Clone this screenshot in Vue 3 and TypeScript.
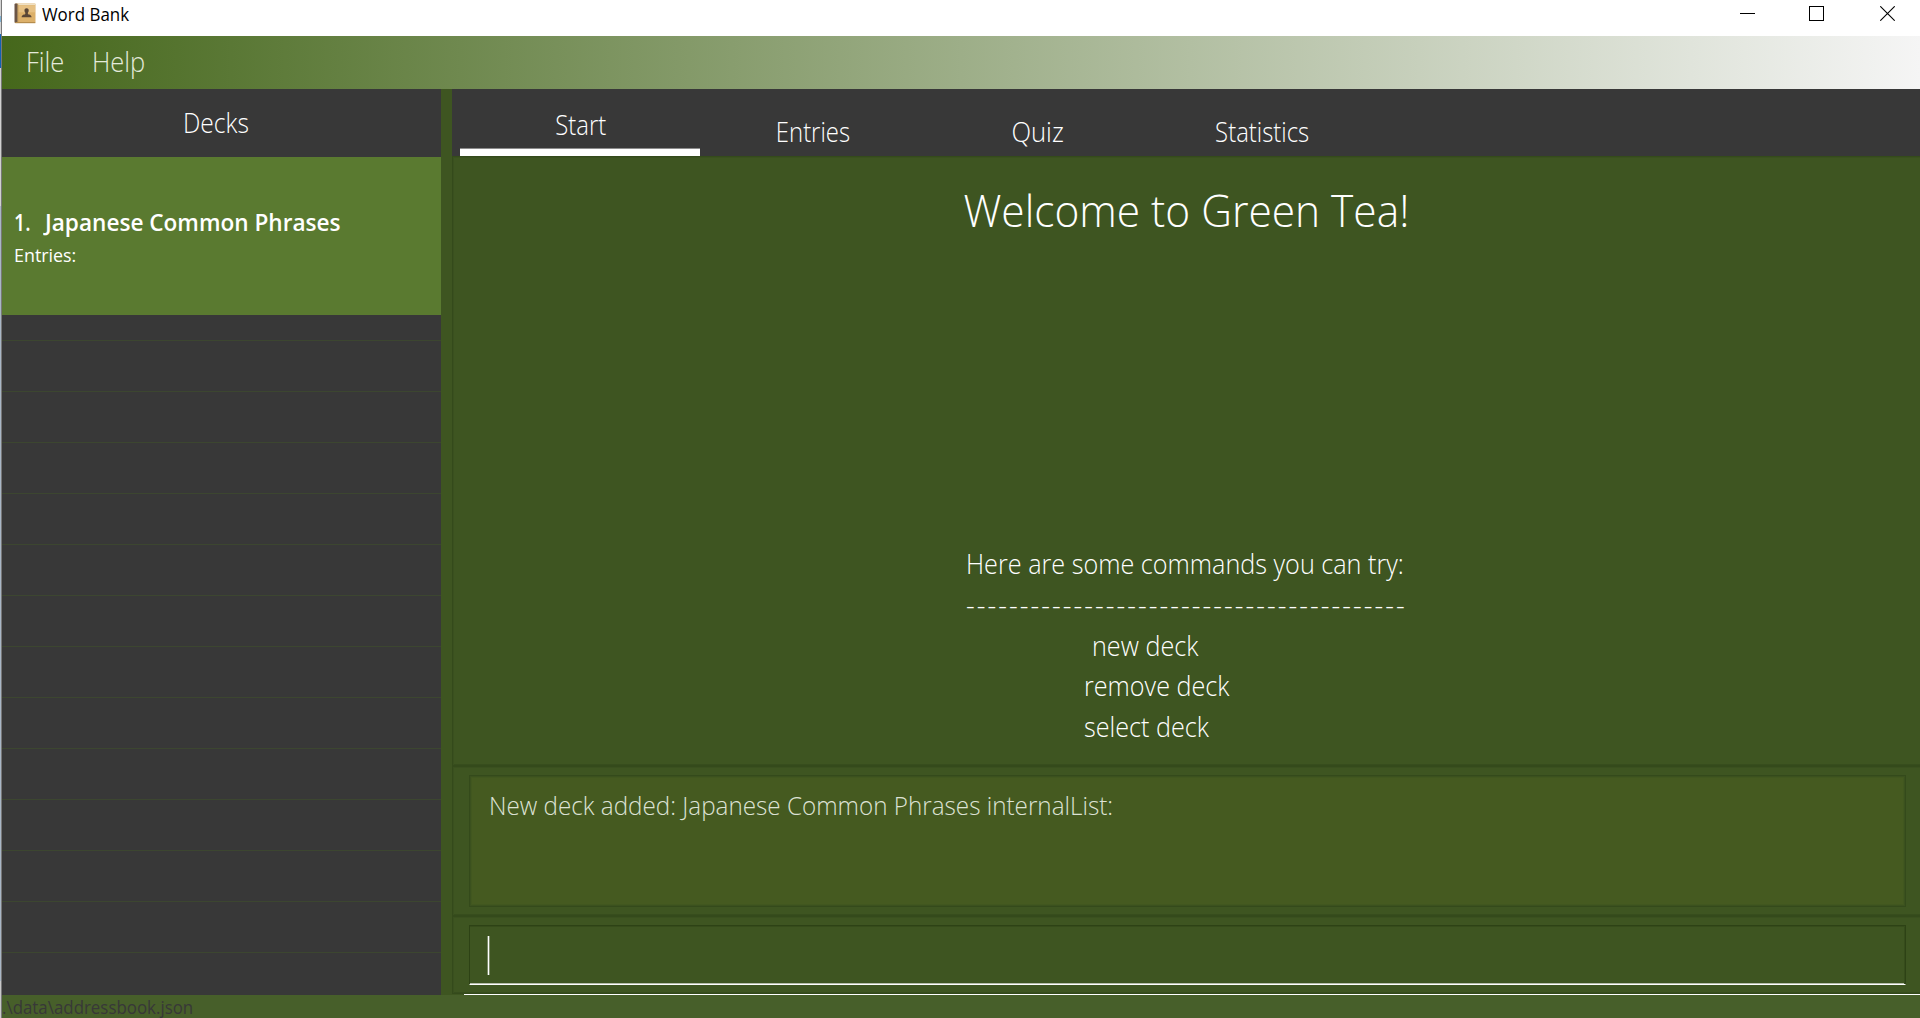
<script setup lang="ts">
interface Tab {
  key: string
  label: string
  active: boolean
}

const menus: string[] = ['File', 'Help']
const tabs: Tab[] = [
  { key: 'start', label: 'Start', active: true },
  { key: 'entries', label: 'Entries', active: false },
  { key: 'quiz', label: 'Quiz', active: false },
  { key: 'statistics', label: 'Statistics', active: false },
]
const rule: string = '-'.repeat(41)
const commands: string[] = ['new deck', 'remove deck', 'select deck']
</script>

<template>
  <div class="screen">
    <div class="edge"></div>
    <div class="window">
      <header class="titlebar">
        <svg class="app-icon" width="22" height="21" viewBox="0 0 22 21">
          <rect x="1" y="0.5" width="20.5" height="19.5" rx="1" fill="#dcb06a" />
          <rect x="4" y="0.5" width="17.5" height="1.6" fill="#efe0c4" />
          <rect x="4.5" y="2.3" width="16.5" height="7" fill="#e6c083" />
          <rect x="0.5" y="0.5" width="3.2" height="19.5" rx="1" fill="#6b5546" />
          <rect x="3.2" y="1" width="1" height="18.5" fill="#a98a5c" />
          <rect x="1.3" y="19" width="20" height="1.2" fill="#b58c4c" />
          <path d="M12.6 5.2c1.6 0 2.3 1.1 2.1 2.6-.1 1-.5 1.5-.8 1.9v1.3c.5.6 3.700.6 3.700 3.300H7.600c0-2.700 3.200-2.700 3.700-3.300V9.700c-.3-.4-.7-.9-.8-1.900-.2-1.500.5-2.600 2.100-2.600z" fill="#5a4636" />
        </svg>
        <span class="title">Word Bank</span>
        <div class="controls">
          <svg width="15" height="15" viewBox="0 0 15 15"><rect y="7" width="15" height="1" fill="#000" /></svg>
          <svg width="15" height="15" viewBox="0 0 15 15"><rect x="0.5" y="0.5" width="14" height="14" fill="none" stroke="#000" /></svg>
          <svg class="close" width="15" height="15" viewBox="0 0 15 15"><path d="M0.3 0.3L14.7 14.7M14.7 0.3L0.3 14.7" stroke="#000" stroke-width="1.1" /></svg>
        </div>
      </header>

      <nav class="menubar">
        <span v-for="m in menus" :key="m" :class="m.toLowerCase()">{{ m }}</span>
      </nav>

      <div class="body">
        <aside class="sidebar">
          <div class="side-head"><span>Decks</span></div>
          <div class="deck">
            <div class="deck-name"><span class="num">1.</span><span class="name">Japanese Common Phrases</span></div>
            <div class="deck-sub"><span>Entries:</span></div>
          </div>
          <div class="empty first"></div>
          <div v-for="n in 12" :key="n" class="empty"></div>
        </aside>

        <main class="content">
          <div class="tabs">
            <div v-for="t in tabs" :key="t.key" class="tab" :class="[t.key, { active: t.active }]"><span>{{ t.label }}</span></div>
          </div>
          <section class="pane start-pane">
            <h1>Welcome to Green Tea!</h1>
            <div class="hints">
              <div class="hint-head"><span>Here are some commands you can try:</span></div>
              <div class="rule">{{ rule }}</div>
              <div v-for="(c, i) in commands" :key="c" class="cmd" :class="'cmd' + i"><span>{{ c }}</span></div>
            </div>
          </section>
          <section class="pane result-pane">
            <div class="result"><span>New deck added: Japanese Common Phrases internalList:</span></div>
          </section>
          <section class="pane command-pane">
            <div class="command"><i class="caret"></i></div>
          </section>
          <div class="baseline"></div>
        </main>
      </div>

      <footer class="status"><span>.\data\addressbook.json</span></footer>
    </div>
  </div>
</template>

<style>
body {
  margin: 0;
  overflow: hidden;
}
</style>

<style scoped>
.screen {
  display: flex;
  width: 1920px;
  height: 1018px;
  overflow: hidden;
  font-family: "Open Sans", "Noto Sans", sans-serif;
  font-weight: 300;
  color: #fff;
  white-space: pre;
}
span {
  display: inline-block;
  transform-origin: 0 50%;
}
.edge {
  box-sizing: border-box;
  width: 2px;
  border-right: 1px solid #787878;
  background: linear-gradient(#d4d4d4 0 16px, #7fb0d0 16px 22px, #d4d4d4 22px 34px, #1161b4 34px 68px, #d0d0d0 68px 206px, #a9b7c6 206px 981px, #c8c8c8 981px);
}
.window {
  display: flex;
  flex-direction: column;
  width: 1918px;
}
.titlebar {
  display: flex;
  height: 36px;
  background: #fff;
  color: #000;
}
.app-icon {
  margin: 3px 6px 0 12px;
}
.title {
  font-size: 18px;
  line-height: 28px;
  font-weight: 400;
  transform: scaleX(0.94);
}
.controls {
  display: flex;
  gap: 54px;
  margin: 6px 25px 0 auto;
}
.close {
  margin-left: 2px;
}
.menubar {
  display: flex;
  height: 53px;
  padding-left: 24px;
  background: linear-gradient(90deg, #45671b, #f5f5f5);
  font-size: 28px;
  line-height: 51px;
  color: #e4eadb;
}
.menubar span {
  transform: scaleX(0.91);
}
.help {
  margin-left: 24px;
}
.body {
  display: flex;
  height: 906px;
  background: #3e5521;
}
.sidebar {
  width: 439px;
  margin-right: 11px;
  background: #383838;
  overflow: hidden;
}
.side-head {
  height: 68px;
  padding-left: 181px;
  font-size: 27px;
  line-height: 68px;
}
.side-head span {
  transform: scaleX(0.91);
}
.deck {
  box-sizing: border-box;
  height: 158px;
  padding: 50px 0 0 12px;
  background: #5a7a30;
}
.deck-name {
  display: flex;
  height: 32px;
  font-size: 23px;
  line-height: 30px;
  font-weight: 600;
}
.num {
  width: 31px;
  transform: scaleX(0.85);
}
.name {
  transform: scaleX(0.982);
}
.deck-sub {
  font-size: 19px;
  line-height: 32px;
  font-weight: 400;
}
.deck-sub span {
  transform: scaleX(0.94);
}
.empty {
  box-sizing: border-box;
  height: 51px;
  border-bottom: 1px solid #3c4630;
}
.empty.first {
  height: 26px;
}
.content {
  display: flex;
  flex-direction: column;
  width: 1468px;
}
.tabs {
  display: flex;
  height: 67px;
  padding-left: 8px;
  background: #383838;
  font-size: 27px;
}
.tab {
  box-sizing: border-box;
  width: 225px;
  height: 67px;
  text-align: center;
  line-height: 86px;
}
.tab span {
  transform: scaleX(0.885);
  transform-origin: 50% 50%;
}
.tab.quiz span {
  transform: scaleX(0.95);
}
.tab.active {
  width: 240px;
  padding-left: 1px;
  line-height: 72px;
  border-bottom: 7px solid #fff;
  box-shadow: inset 0 -1px #8c8c8c;
}
.pane {
  box-sizing: border-box;
  border: solid #344a1b;
  border-width: 1px 0 1px 1px;
  box-shadow: inset 1px 1px #3a501f, inset 0 -1px #374d1d;
}
.start-pane {
  display: flex;
  flex-direction: column;
  align-items: center;
  height: 610px;
}
h1 {
  margin: 23px 0 0;
  font-size: 45px;
  line-height: 60px;
  font-weight: 300;
  transform: scaleX(0.943);
}
.hints {
  width: 441px;
  margin-top: 304px;
  font-size: 27px;
  line-height: 40.6px;
}
.hint-head span {
  transform: scaleX(0.933);
}
.rule {
  height: 41px;
  line-height: 39px;
  letter-spacing: 2.06px;
}
.cmd {
  padding-left: 118px;
}
.cmd span {
  transform: scaleX(0.932);
}
.cmd0 {
  padding-left: 126px;
}
.result-pane {
  height: 150px;
  padding: 8px 14px 0 16px;
}
.result {
  box-sizing: border-box;
  height: 132px;
  padding: 10px 0 0 19px;
  border: 1px solid #344a1b;
  background: #455a20;
  box-shadow: inset 0 0 0 1px #3b511e, inset 0 0 0 2px #41571f;
  font-size: 26px;
  line-height: 38px;
  color: #dde2d5;
}
.result span {
  transform: scaleX(0.932);
}
.command-pane {
  height: 78px;
  padding: 8px 14px 0 16px;
}
.command {
  box-sizing: border-box;
  height: 60px;
  padding: 10px 0 0 17px;
  border: 1px solid #2d4215;
  border-bottom: 1px solid #fff;
  box-shadow: inset 0 1px #364c1b, inset -1px 0 #364c1b, inset 0 -1px #b4bcaa;
}
.caret {
  display: block;
  width: 1px;
  height: 39px;
  margin-left: 1px;
  background: #fff;
  box-shadow: -1px 0 #7b8b69, 1px 0 #7b8b69;
}
.baseline {
  height: 1px;
  margin-left: 12px;
  background: #fff;
}
.status {
  height: 23px;
  background: #475f2a;
  color: #383838;
  font-size: 18px;
  line-height: 25px;
  font-weight: 400;
}
.status span {
  transform: scaleX(0.938);
}
</style>
